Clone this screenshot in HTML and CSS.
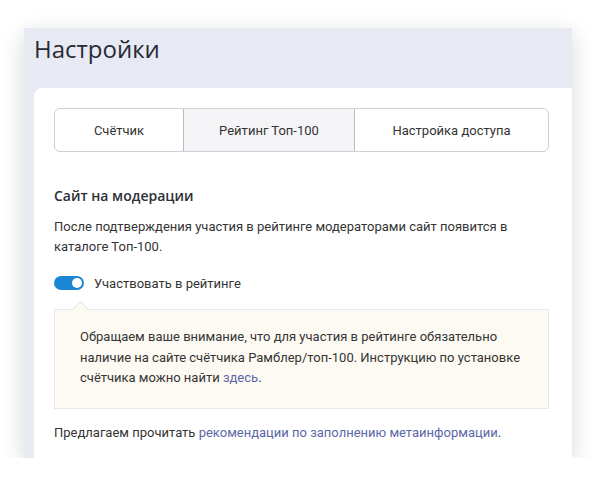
FILE: index.html
```html
<!DOCTYPE html>
<html lang="ru">
<head>
<meta charset="utf-8">
<link rel="stylesheet" href="styles.css">
</head>
<body>
<div class="panel">
  <h1 class="title">Настройки</h1>
  <div class="card">
    <div class="tabs">
      <div class="tab">Счётчик</div>
      <div class="tab active">Рейтинг Топ-100</div>
      <div class="tab">Настройка доступа</div>
    </div>
    <h2 class="heading">Сайт на модерации</h2>
    <p class="text">После подтверждения участия в рейтинге модераторами сайт появится в каталоге Топ-100.</p>
    <label class="toggle-row">
      <span class="toggle"><span class="knob"></span></span>
      <span class="toggle-label">Участвовать в рейтинге</span>
    </label>
    <div class="notice">
      <p>Обращаем ваше внимание, что для участия в рейтинге обязательно наличие на сайте счётчика Рамблер/топ-100. Инструкцию по установке счётчика можно найти <a href="#" class="link">здесь</a>.</p>
    </div>
    <p class="text footer">Предлагаем прочитать <a href="#" class="link">рекомендации по заполнению метаинформации</a>.</p>
  </div>
</div>
</body>
</html>
```
FILE: styles.css
```css
html, body {
  margin: 0;
  padding: 0;
  background: #ffffff;
}
body {
  padding: 28px 0 0 24px;
  font-family: Roboto, "Liberation Sans", sans-serif;
  color: #343434;
}
.panel {
  width: 548px;
  height: 430px;
  background: #e7eaf2;
  box-shadow: 0 6px 22px rgba(0, 0, 0, 0.16);
  overflow: hidden;
  display: flex;
  flex-direction: column;
}
.title {
  margin: 0;
  padding: 4px 0 0 10px;
  height: 56px;
  font-family: "Open Sans", sans-serif;
  font-weight: 400;
  font-size: 24px;
  line-height: 34px;
  color: #272b36;
}
.card {
  flex: 1;
  margin-left: 10px;
  background: #ffffff;
  border-top-left-radius: 8px;
  padding: 20px 23px 0 20px;
}
.tabs {
  display: grid;
  grid-template-columns: 128px 171px 1fr;
  height: 44px;
  border: 1px solid #cfd1d6;
  border-radius: 6px;
  overflow: hidden;
  box-sizing: border-box;
}
.tab {
  display: flex;
  align-items: center;
  justify-content: center;
  font-size: 13px;
  color: #333333;
}
.tab + .tab {
  border-left: 1px solid #b9bcc3;
}
.tab.active {
  background: #f5f5f8;
}
.heading {
  margin: 33px 0 0;
  font-family: "Open Sans", sans-serif;
  font-size: 14px;
  font-weight: 600;
  line-height: 22px;
  color: #2c2f36;
}
.text {
  margin: 10px 0 0;
  font-size: 13px;
  line-height: 20px;
  color: #343434;
}
.toggle-row {
  display: flex;
  align-items: center;
  gap: 10px;
  margin-top: 19px;
  height: 14px;
}
.toggle {
  width: 30px;
  height: 14px;
  border-radius: 7px;
  background: #1b87d4;
  position: relative;
  display: block;
}
.knob {
  position: absolute;
  right: 2px;
  top: 2px;
  width: 10px;
  height: 10px;
  border-radius: 50%;
  background: #ffffff;
}
.toggle-label {
  font-size: 13px;
  color: #343434;
}
.notice {
  position: relative;
  margin-top: 19px;
  background: #fdfaf3;
  border: 1px solid #e6e8ee;
  padding: 17px 25px 19px 25px;
}
.notice::before {
  content: "";
  position: absolute;
  left: 20px;
  top: -7px;
  width: 10px;
  height: 10px;
  background: #fdfaf3;
  border-left: 1px solid #e6e8ee;
  border-top: 1px solid #e6e8ee;
  transform: rotate(45deg);
}
.notice p {
  margin: 0;
  font-size: 13px;
  line-height: 20.5px;
  color: #343434;
}
.link {
  color: #5b67a5;
  text-decoration: none;
}
.footer {
  margin-top: 14px;
}
```
